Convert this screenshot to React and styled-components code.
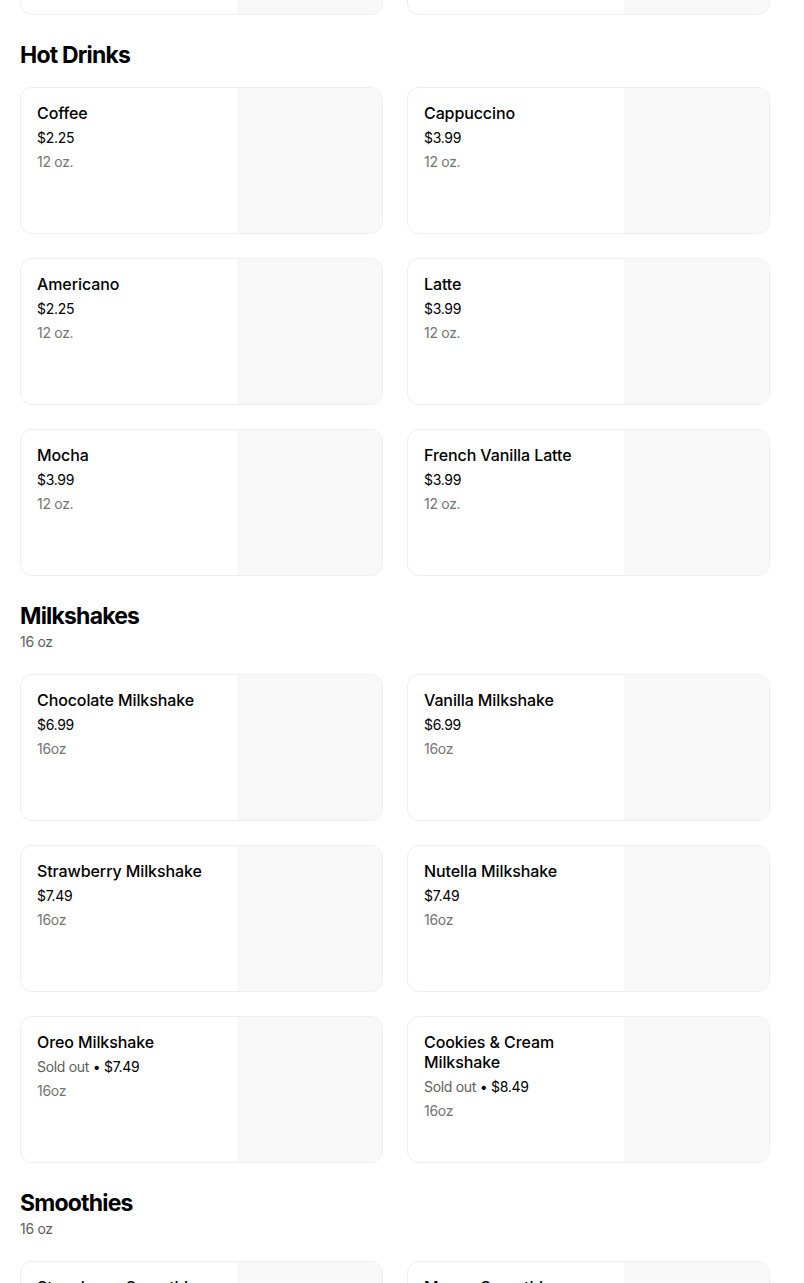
import React from 'react';
import styled, { createGlobalStyle } from 'styled-components';

const GlobalStyle = createGlobalStyle`
  html, body {
    margin: 0;
    padding: 0;
    background: #ffffff;
  }
  body {
    font-family: Inter, "Noto Sans", "Liberation Sans", sans-serif;
    color: #000000;
    -webkit-font-smoothing: antialiased;
  }
`;

const sections = [
  {
    id: 'hot',
    title: 'Hot Drinks',
    items: [
      { id: 'h1', name: 'Coffee', price: '$2.25', desc: '12 oz.' },
      { id: 'h2', name: 'Cappuccino', price: '$3.99', desc: '12 oz.' },
      { id: 'h3', name: 'Americano', price: '$2.25', desc: '12 oz.' },
      { id: 'h4', name: 'Latte', price: '$3.99', desc: '12 oz.' },
      { id: 'h5', name: 'Mocha', price: '$3.99', desc: '12 oz.' },
      { id: 'h6', name: 'French Vanilla Latte', price: '$3.99', desc: '12 oz.' },
    ],
  },
  {
    id: 'shakes',
    title: 'Milkshakes',
    subtitle: '16 oz',
    items: [
      { id: 'm1', name: 'Chocolate Milkshake', price: '$6.99', desc: '16oz' },
      { id: 'm2', name: 'Vanilla Milkshake', price: '$6.99', desc: '16oz' },
      { id: 'm3', name: 'Strawberry Milkshake', price: '$7.49', desc: '16oz' },
      { id: 'm4', name: 'Nutella Milkshake', price: '$7.49', desc: '16oz' },
      { id: 'm5', name: 'Oreo Milkshake', price: '$7.49', desc: '16oz', soldOut: true },
      { id: 'm6', name: 'Cookies & Cream Milkshake', price: '$8.49', desc: '16oz', soldOut: true },
    ],
  },
  {
    id: 'smoothies',
    title: 'Smoothies',
    subtitle: '16 oz',
    items: [
      { id: 's1', name: 'Strawberry Smoothie', price: '$6.99', desc: '16oz' },
      { id: 's2', name: 'Mango Smoothie', price: '$6.99', desc: '16oz' },
    ],
  },
];

// the page is shown scrolled: the last row of the previous section peeks in at the top
const Page = styled.div`
  margin-top: -132px;
  padding: 0 34px 40px 20px;
  display: flex;
  flex-direction: column;
  gap: 24px;
`;

const Section = styled.section`
  display: flex;
  flex-direction: column;
`;

const SectionHeader = styled.div`
  display: flex;
  flex-direction: column;
  padding-bottom: ${(p) => (p.$hasSubtitle ? '22px' : '16px')};
`;

const SectionTitle = styled.h2`
  margin: 0;
  font-size: 23px;
  line-height: 32px;
  font-weight: 700;
  letter-spacing: -0.8px;
  color: #000000;
`;

const SectionSubtitle = styled.div`
  font-size: 14px;
  line-height: 20px;
  color: #5e5e5e;
  font-weight: 400;
  letter-spacing: -0.3px;
`;

const Grid = styled.div`
  display: grid;
  grid-template-columns: 1fr 1fr;
  column-gap: 24px;
  row-gap: 24px;
`;

const Card = styled.div`
  display: grid;
  grid-template-columns: 1fr 145px;
  height: 147px;
  box-sizing: border-box;
  border: 1px solid #eeeeee;
  border-radius: 12px;
  overflow: hidden;
  background: #ffffff;
`;

const Info = styled.div`
  padding: 15px 16px 16px 16px;
  display: flex;
  flex-direction: column;
  min-width: 0;
`;

const Name = styled.div`
  font-size: 16px;
  line-height: 20px;
  font-weight: 500;
  color: #000000;
  letter-spacing: -0.1px;
`;

const Price = styled.div`
  margin-top: 5px;
  font-size: 14px;
  line-height: 20px;
  color: #000000;
  letter-spacing: -0.3px;
`;

const SoldOut = styled.span`
  color: #5e5e5e;
`;

const Desc = styled.div`
  margin-top: 4px;
  font-size: 14px;
  line-height: 20px;
  color: #757575;
  letter-spacing: -0.3px;
`;

const Thumb = styled.div`
  background: #f8f8f8;
`;

function MenuItem({ item }) {
  return (
    <Card>
      <Info>
        {item && (
          <>
            <Name>{item.name}</Name>
            <Price>
              {item.soldOut && <SoldOut>Sold out </SoldOut>}
              {item.soldOut && '• '}
              {item.price}
            </Price>
            <Desc>{item.desc}</Desc>
          </>
        )}
      </Info>
      <Thumb />
    </Card>
  );
}

function App() {
  return (
    <>
      <GlobalStyle />
      <Page>
        <Grid>
          <MenuItem />
          <MenuItem />
        </Grid>
        {sections.map((section) => (
          <Section key={section.id}>
            <SectionHeader $hasSubtitle={!!section.subtitle}>
              <SectionTitle>{section.title}</SectionTitle>
              {section.subtitle && <SectionSubtitle>{section.subtitle}</SectionSubtitle>}
            </SectionHeader>
            <Grid>
              {section.items.map((item) => (
                <MenuItem key={item.id} item={item} />
              ))}
            </Grid>
          </Section>
        ))}
      </Page>
    </>
  );
}

export default App;
